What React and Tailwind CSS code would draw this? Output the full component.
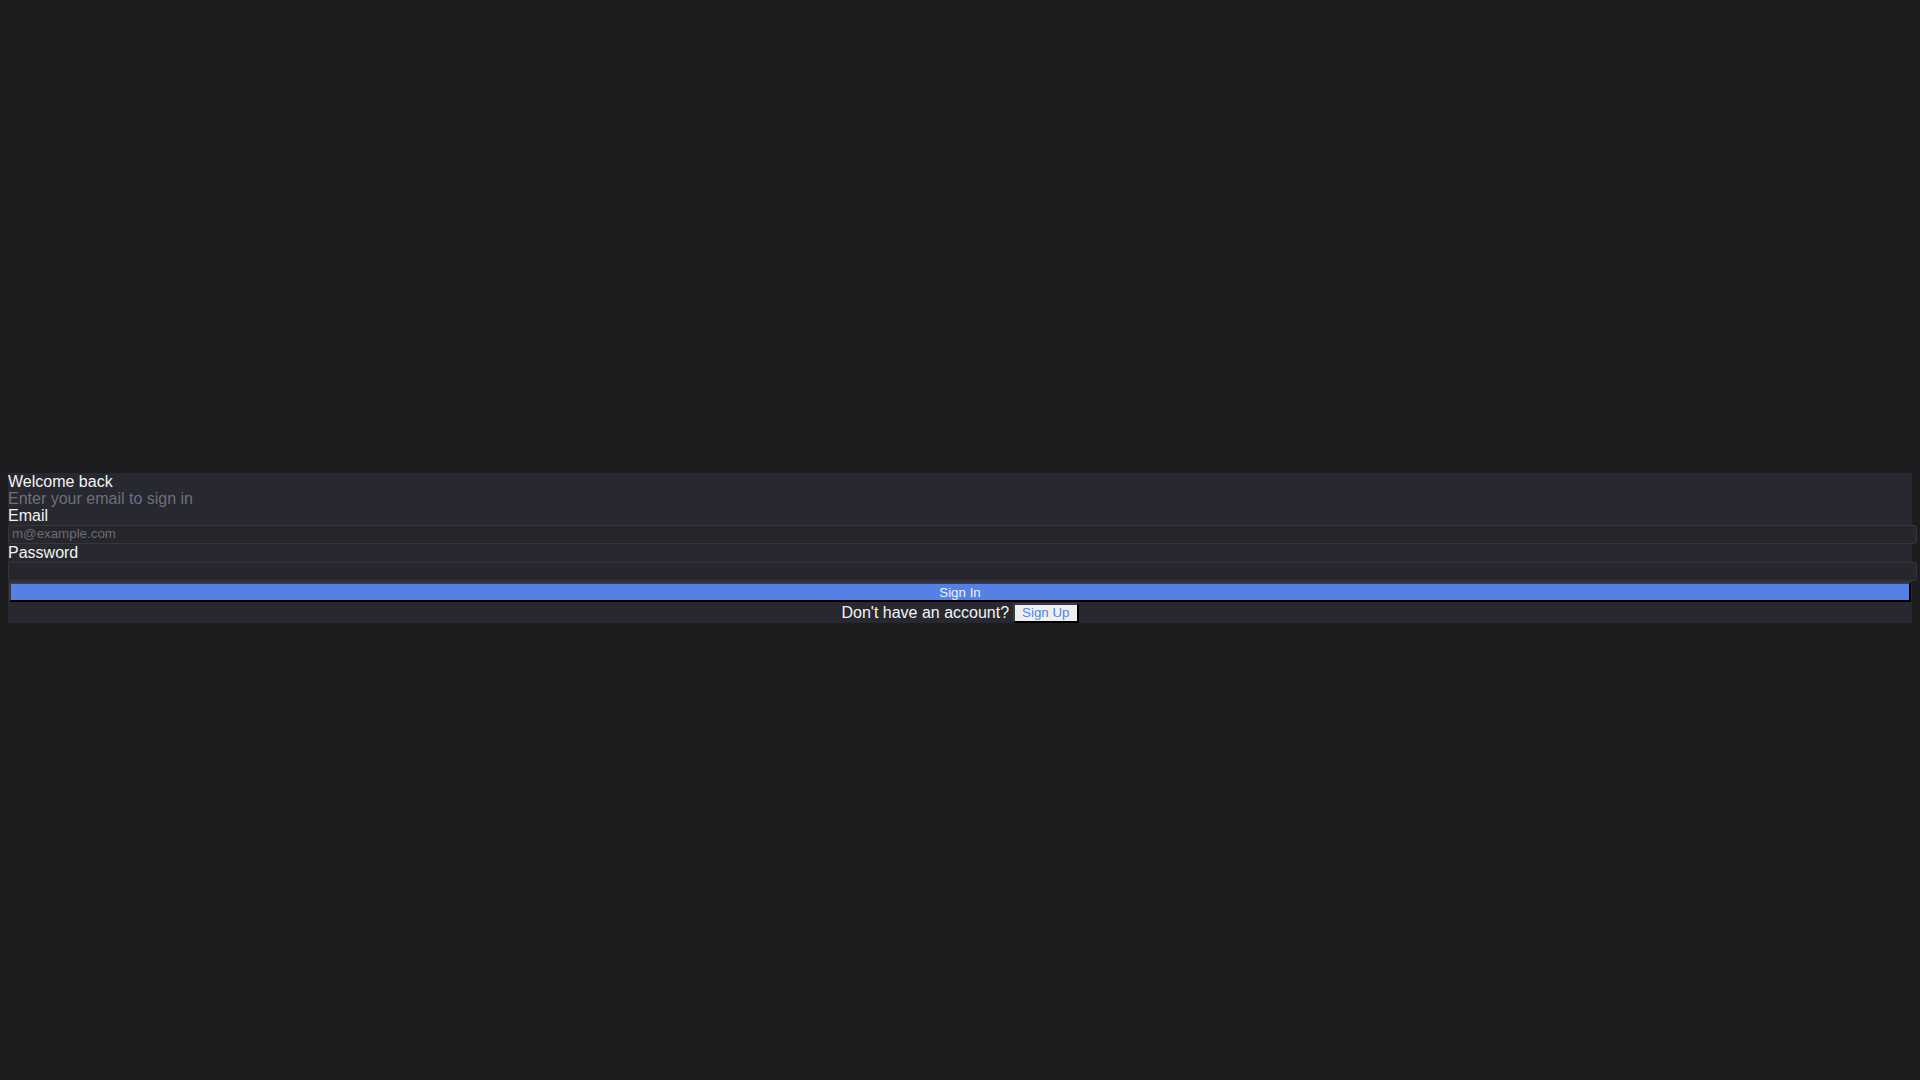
import { useState } from 'react'

// Bare sign-in card, styled to look like a page with browser default form controls
export default function App() {
  const [email, setEmail] = useState('')
  const [password, setPassword] = useState('')

  return (
    <div className="h-screen overflow-hidden bg-[#1d1d1f] p-2 font-['Liberation_Sans',Arial,sans-serif]">
      <div className="flex min-h-[1080px] items-center">
        <form
          className="flex w-full flex-col bg-[#282830]"
          onSubmit={(e) => e.preventDefault()}
        >
          <h1 className="text-[16px] leading-[17px] text-[#f4f4f5]">Welcome back</h1>
          <p className="text-[16px] leading-[17.5px] text-[#6f6f7c]">Enter your email to sign in</p>

          <label htmlFor="email" className="text-[16px] leading-[17.5px] text-[#f4f4f5]">
            Email
          </label>
          <input
            id="email"
            type="email"
            value={email}
            onChange={(e) => setEmail(e.target.value)}
            placeholder="m@example.com"
            className="h-[19px] w-[calc(100%+5px)] rounded-[3px] border border-[#36363f] bg-[#26262d] px-[3px] text-[13.33px] text-[#f4f4f5] outline-none placeholder:text-[#6b6b74]"
          />

          <label htmlFor="password" className="text-[16px] leading-[18.5px] text-[#f4f4f5]">
            Password
          </label>
          <input
            id="password"
            type="password"
            value={password}
            onChange={(e) => setPassword(e.target.value)}
            className="h-[19px] w-[calc(100%+5px)] rounded-[3px] border border-[#36363f] bg-[#26262d] px-[3px] text-[13.33px] text-[#f4f4f5] outline-none"
          />

          <button
            type="submit"
            className="mx-[1px] mt-[1px] h-[20px] border-2 border-t-[#3b3b44] border-l-[#3b3b44] border-r-black border-b-black bg-[#5581e7] text-[13.33px] leading-none text-[#eef2ff]"
          >
            Sign In
          </button>

          <div className="flex h-[21px] items-center justify-center gap-[4px] text-[16px] text-[#f4f4f5]">
            <span>Don't have an account?</span>
            <button
              type="button"
              className="h-[20px] border-2 border-t-[#3b3b44] border-l-[#3b3b44] border-r-black border-b-black bg-[#efefef] px-[7px] text-[13.33px] leading-none text-[#5581e7]"
            >
              Sign Up
            </button>
          </div>
        </form>
      </div>
    </div>
  )
}
